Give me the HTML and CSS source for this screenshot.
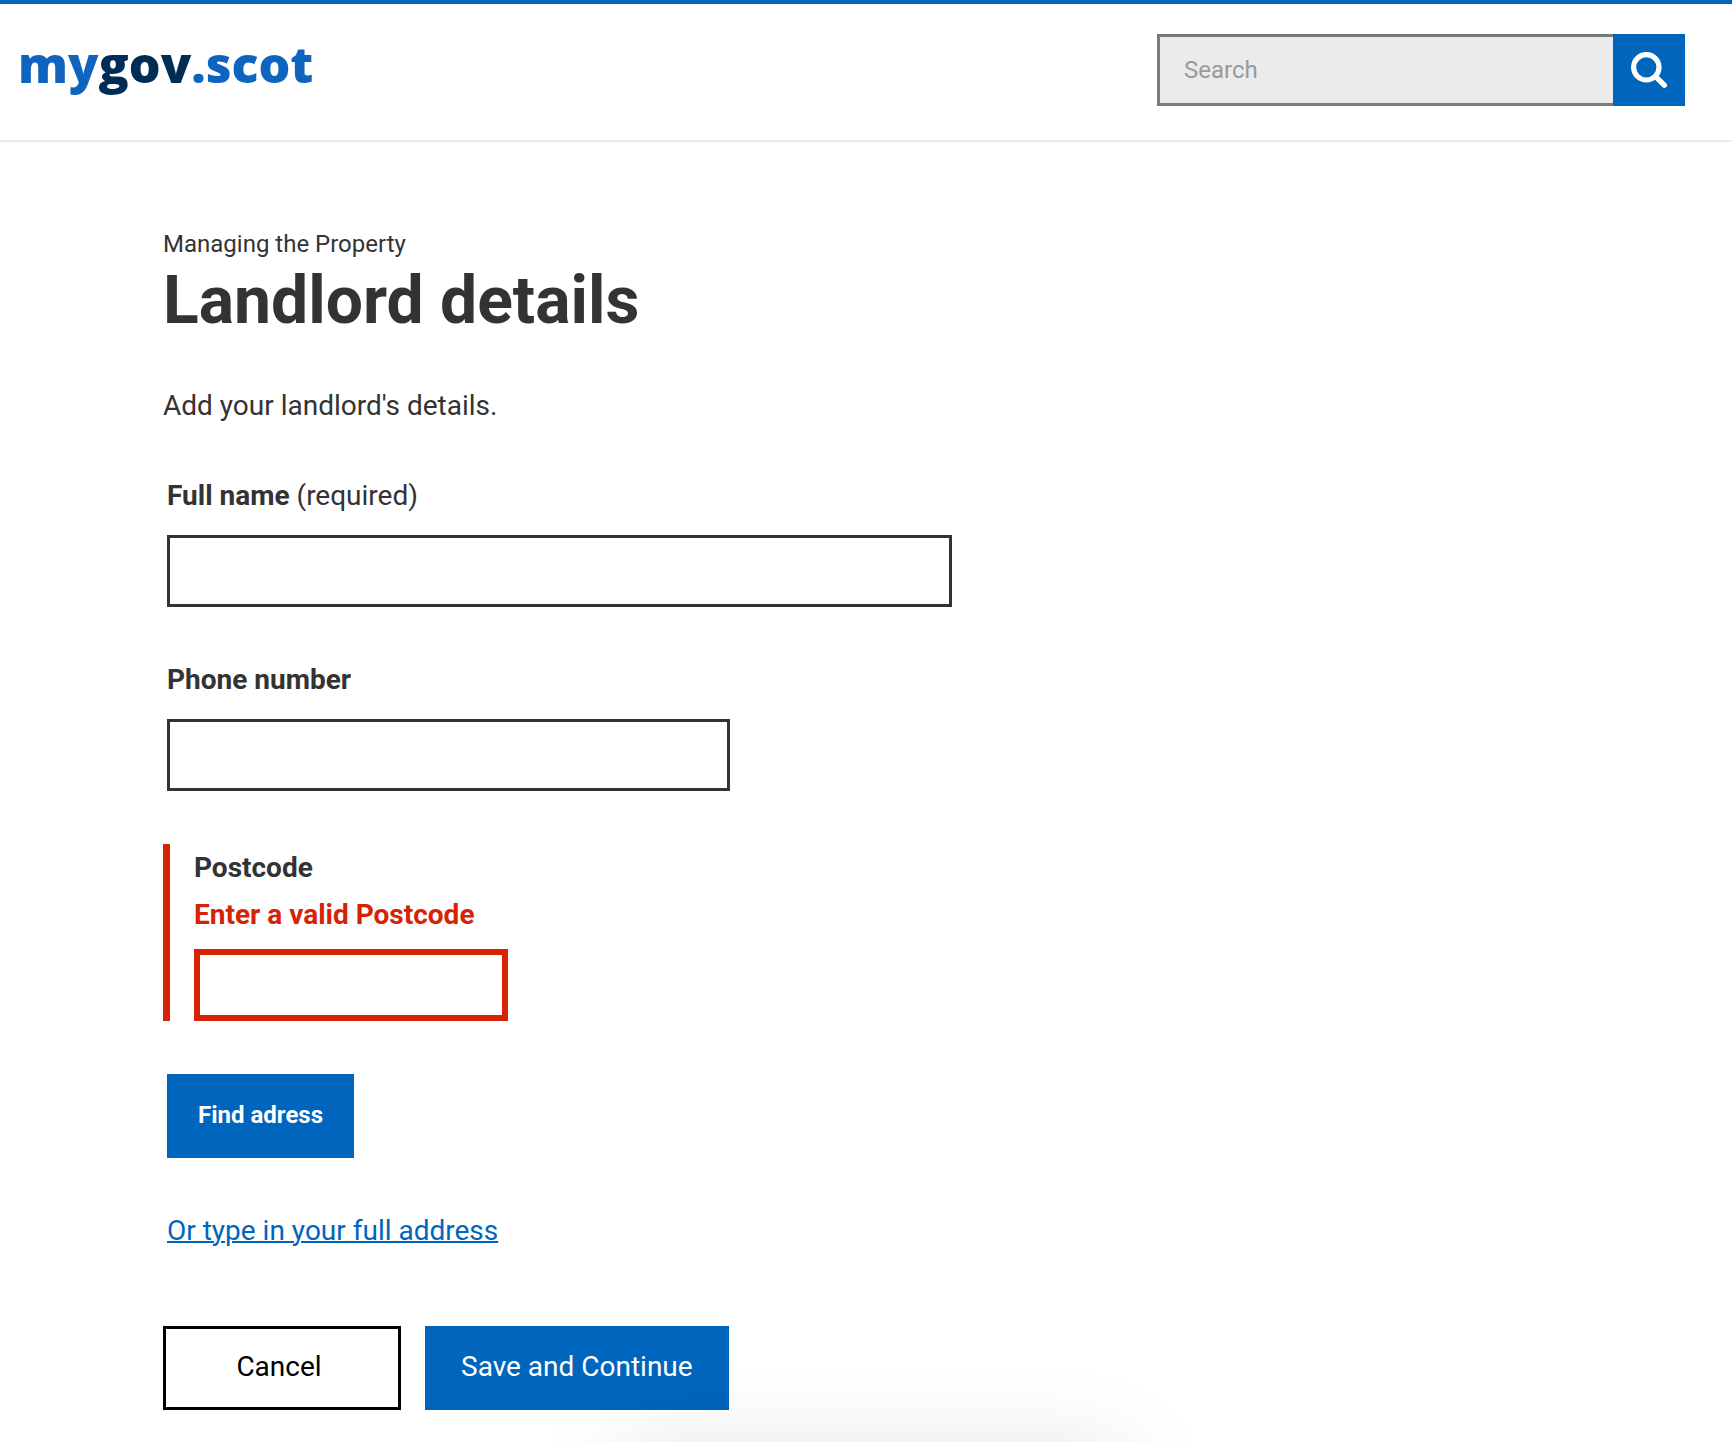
FILE: index.html
```html
<!DOCTYPE html>
<html lang="en">
<head>
  <meta charset="utf-8">
  <meta name="viewport" content="width=device-width, initial-scale=1">
  <title>Landlord details - mygov.scot</title>
  <link rel="stylesheet" href="styles.css">
</head>
<body>
  <header class="site-header">
    <a class="logo" href="#">my<span class="logo-dark">gov</span>.scot</a>
    <form class="search" role="search">
      <input class="search-input" type="search" placeholder="Search" aria-label="Search">
      <button class="search-button" type="submit" aria-label="Search">
        <svg class="search-icon" viewBox="0 0 36 36" aria-hidden="true">
          <circle cx="15.3" cy="15.3" r="12.7" fill="none" stroke="currentColor" stroke-width="5.2"/>
          <path d="M24.6 24.6 33.3 33.2" fill="none" stroke="currentColor" stroke-width="5.4" stroke-linecap="round"/>
        </svg>
      </button>
    </form>
  </header>

  <main class="page">
    <p class="section-name">Managing the Property</p>
    <h1 class="title">Landlord details</h1>
    <p class="intro">Add your landlord's details.</p>

    <form class="details">
      <div class="fields">
        <div class="field">
          <label class="label" for="full-name">Full name <span class="hint">(required)</span></label>
          <input class="input input-wide" id="full-name" type="text" required>
        </div>
        <div class="field">
          <label class="label" for="phone">Phone number</label>
          <input class="input input-medium" id="phone" type="tel">
        </div>
        <div class="field field-error">
          <label class="label" for="postcode">Postcode</label>
          <p class="error" id="postcode-error">Enter a valid Postcode</p>
          <input class="input input-short" id="postcode" type="text" aria-invalid="true" aria-describedby="postcode-error">
        </div>
        <div class="field"><button class="button button-find" type="button">Find adress</button></div>
        <div class="field"><a class="link" href="#">Or type in your full address</a></div>
      </div>
      <div class="actions">
        <button class="button button-cancel" type="button">Cancel</button>
        <button class="button" type="submit">Save and Continue</button>
      </div>
    </form>
  </main>
  <div class="bottom-shade" aria-hidden="true"></div>
</body>
</html>
```
FILE: styles.css
```css
*, *::before, *::after {
  box-sizing: border-box;
}

body {
  margin: 0;
  background: #fff;
  color: #333;
  font-family: Roboto, "Liberation Sans", sans-serif;
  font-size: 28px;
  line-height: 40px;
}

p, h1 {
  margin: 0;
}

.site-header {
  display: flex;
  justify-content: space-between;
  align-items: flex-start;
  gap: 40px;
  padding: 30px 47px 34px 18px;
  border-top: 4px solid #0065bd;
  border-bottom: 2px solid #ebebeb;
}

.logo {
  color: #0f64bf;
  font-family: "Open Sans", "Noto Sans", sans-serif;
  font-size: 50px;
  font-weight: 800;
  line-height: 60px;
  text-decoration: none;
}

.logo-dark {
  color: #002d54;
}

.search {
  display: flex;
  flex: 0 1 528px;
  height: 72px;
}

.search-input {
  flex: 1;
  min-width: 0;
  padding: 0 24px;
  border: 3px solid #7a7a7a;
  border-right: 0;
  border-radius: 0;
  background: #ebebeb;
  color: #333;
  font: inherit;
  font-size: 24px;
  appearance: none;
}

.search-input::placeholder {
  color: #999;
}

.search-button {
  display: flex;
  align-items: center;
  justify-content: center;
  width: 72px;
  padding: 0;
  border: 0;
  background: #0065bd;
  color: #fff;
}

.search-icon {
  width: 36px;
  height: 36px;
}

.page {
  padding: 85px 24px 24px 163px;
}

.section-name {
  font-size: 24px;
  line-height: 34px;
}

.title {
  font-size: 66px;
  font-weight: 700;
  line-height: 80px;
}

.intro {
  margin: 45px 0 50px;
}

.fields {
  display: flex;
  flex-direction: column;
  gap: 53px;
}

.field {
  display: flex;
  flex-direction: column;
  align-items: flex-start;
  padding-left: 4px;
}

.label {
  margin-bottom: 19px;
  font-weight: 700;
}

.hint {
  font-weight: 400;
}

.input {
  width: 100%;
  height: 72px;
  padding: 0 20px;
  border: 3px solid #333;
  border-radius: 0;
  background: #fff;
  color: inherit;
  font: inherit;
}

.input-wide {
  max-width: 785px;
}

.input-medium {
  max-width: 563px;
}

.input-short {
  max-width: 314px;
}

.field-error {
  padding: 4px 0 0 24px;
  border-left: 7px solid #d72205;
}

.field-error .label {
  margin-bottom: 7px;
}

.field-error .input {
  border: 6px solid #d72205;
}

.error {
  margin-bottom: 14px;
  color: #d72205;
  font-weight: 700;
}

.link {
  color: #0065bd;
  text-decoration-thickness: 2px;
}

.button {
  height: 84px;
  padding: 0 36px 2px;
  border: 0;
  background: #0065bd;
  color: #fff;
  font: inherit;
}

.button-find {
  padding: 0 31px 2px;
  font-size: 24px;
  font-weight: 700;
}

.button-cancel {
  min-width: 238px;
  padding-left: 30px;
  border: 3px solid #000;
  background: #fff;
  color: #000;
}

.actions {
  display: flex;
  flex-wrap: wrap;
  gap: 24px;
  margin-top: 75px;
}

/* Soft shade cast upwards by the panel docked under the window's lower edge */
.bottom-shade {
  position: fixed;
  top: 100%;
  left: 50%;
  width: 500px;
  height: 200px;
  margin-left: -245px;
  box-shadow: 0 20px 100px rgba(0, 0, 0, 0.15);
  pointer-events: none;
}
```
